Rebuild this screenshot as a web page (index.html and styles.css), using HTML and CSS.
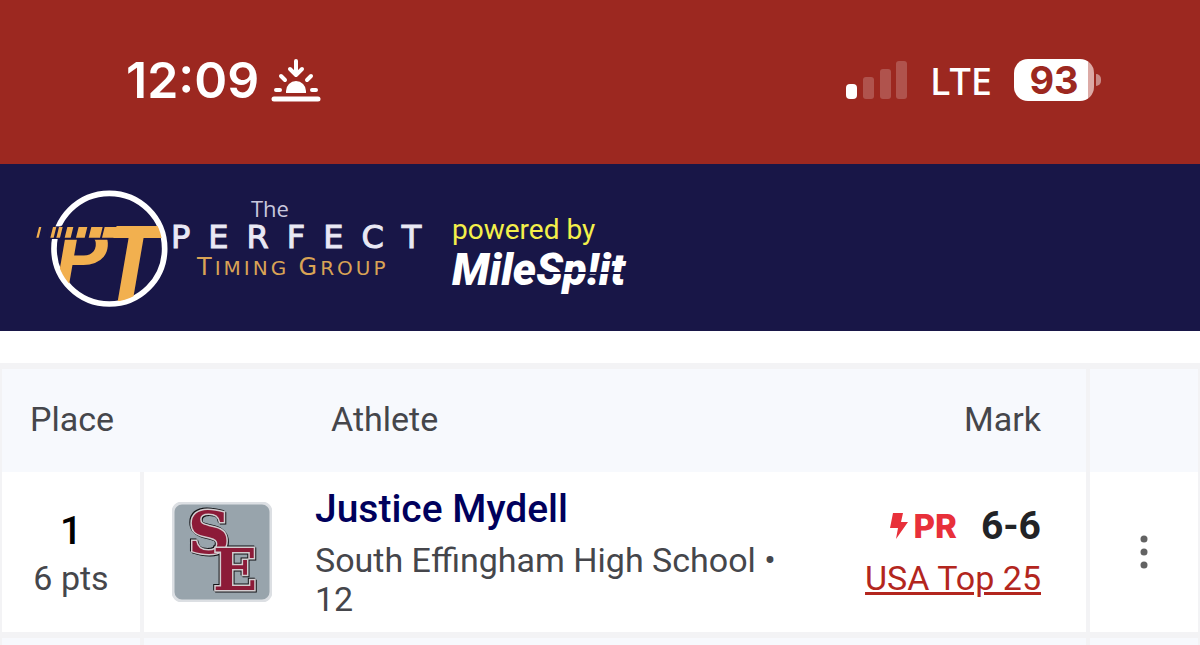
FILE: index.html
```html
<!DOCTYPE html>
<html lang="en">
<head>
    <meta charset="UTF-8">
    <meta name="viewport" content="width=device-width, initial-scale=1.0">
    <title>The Perfect Timing Group – Results</title>
    <link rel="stylesheet" href="styles.css">
</head>
<body>
    <!-- Status bar -->
    <div class="status-bar">
        <div class="status-left">
            <span class="clock">12:09</span>
            <svg class="sunset" width="50" height="44" viewBox="0 0 50 44" fill="none" stroke="#fff" stroke-width="4" stroke-linecap="round" stroke-linejoin="round">
                <path d="M25 3v13M19 11l6 6 6-6M10 18l4 4M40 18l-4 4M5 32h4M41 32h4"/>
                <path d="M15 35v-2a10 10 0 0 1 20 0v2z" fill="#fff" stroke="none"/>
                <path d="M3 41h44" stroke-width="5"/>
            </svg>
        </div>
        <div class="status-right">
            <svg class="signal" width="62" height="40" viewBox="0 0 62 40" fill="#fff">
                <rect x="0" y="24" width="11" height="15" rx="4"/>
                <g opacity=".2">
                    <rect x="17" y="17" width="11" height="22" rx="3"/>
                    <rect x="34" y="9" width="11" height="30" rx="3"/>
                    <rect x="50" y="1" width="11" height="38" rx="3"/>
                </g>
            </svg>
            <span class="network">LTE</span>
            <div class="battery"><span class="battery-level">93</span></div>
        </div>
    </div>

    <!-- Site header -->
    <header class="site-header">
        <a class="brand" href="#">
            <svg class="brand-mark" width="135" height="120" viewBox="40 35 405 360">
                <clipPath id="ring"><circle cx="266" cy="217" r="160"/></clipPath>
                <circle cx="266" cy="217" r="166" fill="none" stroke="#fff" stroke-width="17"/>
                <path d="M80 150h50v38h-50z" fill="#181647"/>
                <g clip-path="url(#ring)" class="brand-letters">
                    <text x="106" y="330" class="brand-p">P</text>
                    <text x="236" y="375">T</text>
                </g>
                <path d="M120 185h164v5h-164zM120 148h168l-10 37h-158z" fill="#181647"/>
                <path d="M55 152h7l-8 32h-7zM97 152h10l-8 32h-10zM115 152h11l-8 32h-11zM140 152h18l-8 32h-18zM174 152h26l-8 32h-26zM212 152h34l-8 32h-34zM252 152h40l-8 32h-40z" fill="#f2b04f"/>
            </svg>
            <span class="brand-name">
                <span class="brand-the">The</span>
                <span class="brand-perfect">PERFECT</span>
                <span class="brand-group"><b>T</b>iming <b>G</b>roup</span>
            </span>
        </a>
        <div class="powered">
            <span class="powered-by">powered by</span>
            <a class="milesplit" href="#">MileSp!it</a>
        </div>
    </header>

    <!-- Results -->
    <main>
        <table class="results">
            <thead>
                <tr>
                    <th class="place">Place</th>
                    <th class="logo"></th>
                    <th class="athlete">Athlete</th>
                    <th class="mark">Mark</th>
                    <th class="menu"></th>
                </tr>
            </thead>
            <tbody>
                <tr>
                    <td class="place">
                        <div class="rank">1</div>
                        <div class="points">6 pts</div>
                    </td>
                    <td class="logo">
                        <svg class="school-logo" width="100" height="100" viewBox="0 0 100 100">
                            <rect x="1" y="1" width="98" height="98" rx="9" fill="#98a4ac" stroke="#dcdfe3" stroke-width="3"/>
                            <g class="letters"><text x="16" y="51">S</text><text x="41" y="88">E</text></g>
                        </svg>
                    </td>
                    <td class="athlete">
                        <a class="athlete-name" href="#">Justice Mydell</a>
                        <div class="school">South Effingham High School • 12</div>
                    </td>
                    <td class="mark">
                        <div class="mark-row">
                            <svg width="18" height="26" viewBox="0 0 18 26" fill="#e8303a"><path d="M3 0h10l-2 9h7L6 26l2-11H0z"/></svg>
                            <span class="pr">PR</span>
                            <span class="mark-value">6-6</span>
                        </div>
                        <a class="ranking" href="#">USA Top 25</a>
                    </td>
                    <td class="menu">
                        <button class="menu-btn" type="button" aria-label="More options">
                            <svg width="8" height="34" viewBox="0 0 8 34" fill="#636363"><circle cx="4" cy="4" r="3.5"/><circle cx="4" cy="17" r="3.5"/><circle cx="4" cy="30" r="3.5"/></svg>
                        </button>
                    </td>
                </tr>
                <tr class="next-row">
                    <td class="place"></td>
                    <td class="logo"></td>
                    <td class="athlete"></td>
                    <td class="mark"></td>
                    <td class="menu"></td>
                </tr>
            </tbody>
        </table>
    </main>
</body>
</html>
```

FILE: styles.css
```css
* {
    box-sizing: border-box;
}
body {
    margin: 0;
    background: #fff;
    color: #45464b;
    font-family: Roboto, Arial, sans-serif;
    font-size: 34px;
}
a {
    text-decoration: none;
}
svg {
    display: block;
}

/* Status bar */
.status-bar {
    display: flex;
    justify-content: space-between;
    align-items: center;
    height: 164px;
    padding: 0 100px 4px 126px;
    background: #9c2820;
    color: #fff;
    font-family: Inter, sans-serif;
}
.status-left, .status-right {
    display: flex;
    align-items: center;
}
.status-left {
    gap: 12px;
}
.clock {
    font-size: 50px;
    font-weight: 600;
}
.status-right {
    gap: 22px;
}
.network {
    font-family: "Noto Sans", sans-serif;
    font-size: 38px;
    font-weight: 500;
}
.battery {
    position: relative;
    display: flex;
    align-items: center;
    justify-content: center;
    width: 80px;
    height: 42px;
    margin-right: 6px;
    border-radius: 14px;
    background: linear-gradient(90deg, #fff 92%, #dcaaa6 92%);
    color: #9c2820;
}
.battery::after {
    content: "";
    position: absolute;
    right: -7px;
    top: 15px;
    width: 5px;
    height: 12px;
    border-radius: 0 6px 6px 0;
    background: #c98a86;
}
.battery-level {
    font-size: 38px;
    font-weight: 700;
}

/* Site header */
.site-header {
    display: flex;
    align-items: center;
    gap: 22px;
    height: 167px;
    padding: 0 22px;
    background: #181647;
}
.brand {
    display: flex;
    align-items: center;
    width: 408px;
    padding-left: 12px;
    color: #e9e8f4;
}
.brand-mark {
    flex: none;
}
.brand-letters {
    fill: #f2b04f;
    font-family: Roboto, sans-serif;
    font-size: 314px;
    font-style: italic;
    font-weight: 700;
}
.brand-p {
    font-size: 250px;
}
.brand-name {
    display: flex;
    flex-direction: column;
    margin-top: -18px;
    padding-left: 2px;
    font-family: "DejaVu Sans", sans-serif;
}
.brand-the {
    padding-left: 80px;
    font-family: "Open Sans", sans-serif;
    font-size: 22px;
    line-height: 28px;
    color: #c9c8de;
}
.brand-perfect {
    font-size: 32px;
    line-height: 30px;
    letter-spacing: 18px;
    -webkit-text-stroke: 1px #e9e8f4;
}
.brand-group {
    padding-left: 26px;
    font-size: 20px;
    line-height: 30px;
    letter-spacing: 3px;
    text-transform: uppercase;
    white-space: nowrap;
    color: #d9a355;
}
.brand-group b {
    font-size: 24px;
    font-weight: 400;
}
.powered {
    display: flex;
    flex-direction: column;
    align-items: flex-start;
    padding-top: 8px;
}
.powered-by {
    font-size: 28px;
    line-height: 36px;
    color: #f4f04a;
}
.milesplit {
    position: relative;
    font-size: 44px;
    line-height: 44px;
    font-weight: 900;
    font-style: italic;
    color: #fff;
}
.milesplit::after {
    content: "";
    position: absolute;
    left: 88px;
    right: 0;
    top: 24px;
    height: 2px;
    background: #181647;
}

/* Results */
main {
    padding-top: 32px;
}
.results {
    width: 100%;
    table-layout: fixed;
    border-collapse: separate;
    border-spacing: 0;
    border: 2px solid #f3f3f5;
    border-top-width: 6px;
    border-bottom: none;
}
th, td {
    padding: 0;
    text-align: left;
    vertical-align: middle;
}
th {
    height: 103px;
    padding-bottom: 4px;
    background: #f7f9fd;
    font-weight: 400;
}
td {
    height: 166px;
    border-bottom: 6px solid #f3f3f5;
}
.place {
    width: 142px;
}
th.place {
    padding-left: 28px;
}
td.place {
    padding-top: 4px;
    border-right: 4px solid #f3f3f5;
    text-align: center;
}
.logo {
    width: 171px;
}
td.logo {
    padding-left: 28px;
}
th.athlete {
    padding-left: 16px;
}
td.athlete {
    padding-right: 32px;
}
.mark {
    width: 260px;
    padding-right: 45px;
    text-align: right;
}
.menu {
    width: 112px;
    border-left: 4px solid #f3f3f5;
}
.rank {
    font-size: 39px;
    line-height: 48px;
    font-weight: 500;
    color: #000;
}
.points {
    line-height: 46px;
}
.school-logo {
    font-family: "DejaVu Serif", serif;
    font-size: 58px;
    font-weight: 700;
}
.letters {
    fill: #8c1b38;
    stroke: #d3cdd0;
    stroke-width: 3px;
    paint-order: stroke;
    filter: drop-shadow(1px 1px 0 #151518) drop-shadow(-1px -1px 0 #151518);
}
.athlete-name {
    display: block;
    margin-bottom: 8px;
    font-size: 39px;
    line-height: 48px;
    font-weight: 500;
    color: #00005c;
}
.school {
    line-height: 39px;
}
.mark-row {
    display: flex;
    align-items: center;
    justify-content: flex-end;
    line-height: 52px;
}
.pr {
    margin: 0 24px 0 6px;
    font-family: Inter, sans-serif;
    font-size: 33px;
    font-weight: 800;
    color: #e8303a;
}
.mark-value {
    font-size: 39px;
    font-weight: 700;
    color: #222326;
}
.ranking {
    display: block;
    line-height: 52px;
    color: #b3261e;
    text-decoration: underline;
}
.menu-btn {
    display: block;
    margin: 0 auto;
    padding: 8px;
    border: none;
    background: none;
    cursor: pointer;
}
.next-row td {
    height: 7px;
    padding: 0;
    border-bottom: none;
    background: #f7f9fd;
}
```
